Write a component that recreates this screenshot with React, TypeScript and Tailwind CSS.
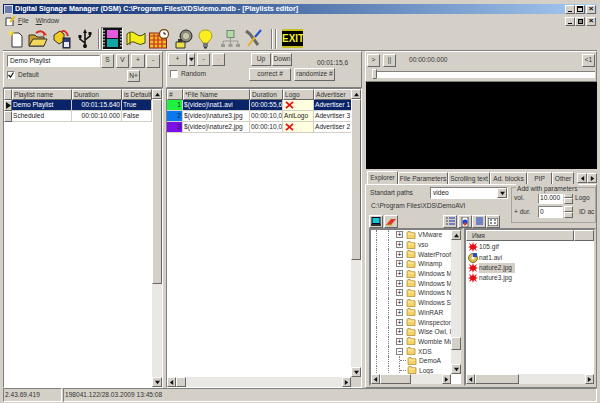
import type { ReactNode } from "react";

const raised = "border border-t-white border-l-white border-r-[#666] border-b-[#666] bg-[#d4d0c8]";
const sunken = "border border-t-[#808080] border-l-[#808080] border-r-white border-b-white";
const track = "bg-[#eae8e4]";

function Btn({ className = "", children }: { className?: string; children?: ReactNode }) {
  return <div className={`${raised} flex items-center justify-center shrink-0 text-[6.6px] leading-none text-[#333] whitespace-nowrap ${className}`}>{children}</div>;
}

function Tri({ dir }: { dir: "up" | "down" | "left" | "right" }) {
  const pts = { up: "3,1 0,5 6,5", down: "0,1 6,1 3,5", left: "5,0 5,6 1,3", right: "1,0 1,6 5,3" }[dir];
  return (
    <svg width="5" height="5" viewBox="0 0 6 6">
      <polygon points={pts} fill="#111" />
    </svg>
  );
}

function WinBtn({ children }: { children: ReactNode }) {
  return <div className={`${raised} w-[10px] h-[9px] flex items-center justify-center`}>{children}</div>;
}

function WinControls({ mdi }: { mdi?: boolean }) {
  return (
    <div className="flex items-center ml-auto">
      <WinBtn><div className="w-[4px] h-[1px] bg-black mt-[4px] mr-[1px]" /></WinBtn>
      {mdi ? (
        <WinBtn><div className="w-[5px] h-[5px] border border-black bg-[#888]" /></WinBtn>
      ) : (
        <WinBtn><div className="w-[6px] h-[6px] border border-black border-t-2" /></WinBtn>
      )}
      <div className="w-[1px]" />
      <WinBtn><span className="text-[8px] leading-none font-bold text-black">×</span></WinBtn>
    </div>
  );
}

function VScroll({ thumbH, className = "" }: { thumbH: number; className?: string }) {
  return (
    <div className={`w-[10px] shrink-0 flex flex-col ${track} ${className}`}>
      <Btn className="w-[10px] h-[10px]"><Tri dir="up" /></Btn>
      {thumbH > 0 && <div className={`${raised} w-[10px] shrink-0`} style={{ height: thumbH }} />}
      <div className="flex-1" />
      <Btn className="w-[10px] h-[10px]"><Tri dir="down" /></Btn>
    </div>
  );
}

function HScroll({ thumbW, className = "" }: { thumbW: number; className?: string }) {
  return (
    <div className={`h-[10px] flex shrink-0 ${track} ${className}`}>
      <Btn className="w-[9px] h-[10px]"><Tri dir="left" /></Btn>
      <div className={`${raised} h-[10px] shrink-0`} style={{ width: thumbW }} />
      <div className="flex-1" />
      <Btn className="w-[9px] h-[10px]"><Tri dir="right" /></Btn>
    </div>
  );
}

function Head({ w, children }: { w: string; children?: ReactNode }) {
  return <div className={`${raised} ${w} h-[11px] shrink-0 pl-[1px] text-[6.6px] leading-[9px] text-[#333] overflow-hidden whitespace-nowrap`}>{children}</div>;
}

function Cell({ w, sel, right, bg = "", children }: { w: string; sel?: boolean; right?: boolean; bg?: string; children?: ReactNode }) {
  return (
    <div className={`${w} h-[11px] shrink-0 px-[1px] border-r border-b border-r-[#d4d0c8] border-b-[#d4d0c8] text-[6.6px] leading-[10px] overflow-hidden whitespace-nowrap ${right ? "text-right" : ""} ${sel ? "bg-[#0a246a] text-white" : `${bg || "bg-white"} text-[#222]`}`}>
      {children}
    </div>
  );
}

function RedX() {
  return (
    <svg width="9" height="8" viewBox="0 0 10 9" className="ml-[1px] mt-[1px]">
      <path d="M1 1 L9 8 M9 1 L1 8" stroke="#e81010" strokeWidth="2" />
    </svg>
  );
}

function Folder() {
  return (
    <svg width="10" height="8" viewBox="0 0 10 9" className="shrink-0">
      <path d="M0.5 2 L0.5 8.5 L9.5 8.5 L9.5 2 L5 2 L4 0.5 L1.5 0.5 Z" fill="#f6d365" stroke="#a8842a" strokeWidth="0.8" />
      <path d="M1.5 3.4 L8.5 3.4" stroke="#fff3c0" strokeWidth="1" />
    </svg>
  );
}

function Splat() {
  return (
    <svg width="10" height="10" viewBox="0 0 10 10" className="shrink-0">
      <path d="M5 0 L6 3 L9 1 L7.5 4 L10 5 L7.5 6 L9 9 L6 7 L5 10 L4 7 L1 9 L2.5 6 L0 5 L2.5 4 L1 1 L4 3 Z" fill="#e80c14" />
    </svg>
  );
}

function Toolbar() {
  return (
    <div className="h-[23px] flex items-center shrink-0">
      {/* new */}
      <svg width="18" height="20" viewBox="0 0 18 20" className="ml-[4px]">
        <path d="M5 4 H12 L15 7 V18 H5 Z" fill="#fff" stroke="#333" />
        <path d="M4 0 L5 3 L8 4 L5 5 L4 8 L3 5 L0 4 L3 3 Z" fill="#f6e23a" />
      </svg>
      {/* open */}
      <svg width="20" height="20" viewBox="0 0 20 20" className="ml-[3px]">
        <path d="M1 6 H7 L9 8 H16 V17 H1 Z" fill="#c9a227" stroke="#333" />
        <path d="M1 17 L5 10 H19 L16 17 Z" fill="#f2d75a" stroke="#333" />
        <path d="M8 4 Q13 0 17 5" fill="none" stroke="#d7301f" strokeWidth="2" />
        <path d="M15 7 L19 6 L16 3 Z" fill="#d7301f" />
      </svg>
      {/* package */}
      <svg width="20" height="20" viewBox="0 0 20 20" className="ml-[4px]">
        <path d="M2 6 L8 2 L12 5 V12 L7 15 L2 11 Z" fill="#f0cc20" stroke="#333" />
        <rect x="11" y="9" width="7" height="10" fill="#2d3f80" stroke="#222" />
        <rect x="12" y="13" width="5" height="5" fill="#e8e8f0" />
        <path d="M9 3 Q14 0 16 7" fill="none" stroke="#d7301f" strokeWidth="2" />
      </svg>
      {/* usb */}
      <svg width="14" height="20" viewBox="0 0 14 20" className="ml-[6px]">
        <path d="M7 19 V3 M7 14 L2 10 V8 M7 11 L12 7 V5" fill="none" stroke="#111" strokeWidth="1.6" />
        <path d="M7 0 L9 4 H5 Z" fill="#111" />
        <circle cx="7" cy="17" r="2" fill="#111" />
        <rect x="0.5" y="6" width="3" height="3" fill="#111" />
        <rect x="10.5" y="3" width="3" height="3" fill="#111" />
      </svg>
      <div className="w-[2px] h-[20px] ml-[6px] border-l border-l-[#808080] border-r border-r-white" />
      {/* film, pressed */}
      <div className="ml-[1px] w-[22px] h-[23px] border border-t-[#808080] border-l-[#808080] border-r-white border-b-white bg-[#e4e2dd] flex items-center justify-center">
        <svg width="19" height="21" viewBox="0 0 19 21">
          <rect width="19" height="21" fill="#111" />
          <rect x="4" y="2" width="11" height="8" fill="#e35ce0" />
          <rect x="4" y="11" width="11" height="8" fill="#12a5a5" />
          <path d="M1 2 V20 M18 2 V20" stroke="#ddd" strokeWidth="1.4" strokeDasharray="1.5 1.5" />
        </svg>
      </div>
      {/* scroll */}
      <svg width="20" height="18" viewBox="0 0 20 18" className="ml-[3px]">
        <path d="M1 4 Q5 0 10 4 T19 3 V13 Q14 16 10 13 T1 15 Z" fill="#f4ec1c" stroke="#4a4a10" />
        <path d="M4 3 V15" stroke="#4a4a10" />
      </svg>
      {/* calendar */}
      <svg width="21" height="20" viewBox="0 0 21 20" className="ml-[3px]">
        <rect x="0.5" y="4" width="17" height="15" fill="#e8c020" stroke="#912020" />
        <path d="M1 7 H17 M1 11 H17 M1 15 H17 M5 5 V19 M9 5 V19 M13 5 V19" stroke="#d02828" strokeWidth="1.2" />
        <circle cx="15" cy="5" r="4.5" fill="#fff" stroke="#7a4a10" strokeWidth="1.3" />
        <path d="M15 3 V5 H17" stroke="#111" fill="none" />
      </svg>
      {/* clock box */}
      <svg width="18" height="20" viewBox="0 0 18 20" className="ml-[5px]">
        <circle cx="11" cy="7" r="6" fill="#8a8a78" stroke="#222" />
        <circle cx="11" cy="7" r="3" fill="#ccc8b0" />
        <path d="M1 13 H10 V19 H1 Z" fill="#eee04a" stroke="#333" />
        <path d="M3 10 H7 V13 H3 Z" fill="#333" />
      </svg>
      {/* bulb */}
      <svg width="15" height="20" viewBox="0 0 15 20" className="ml-[5px]">
        <path d="M7.5 1 C3 1 1 4 1 7 C1 10 4 11 5 14 H10 C11 11 14 10 14 7 C14 4 12 1 7.5 1 Z" fill="#f8ee20" stroke="#a89a20" />
        <rect x="5" y="14" width="5" height="4" fill="#777" />
        <rect x="6" y="18" width="3" height="1.5" fill="#333" />
      </svg>
      {/* network */}
      <svg width="21" height="18" viewBox="0 0 21 18" className="ml-[7px]">
        <rect x="7" y="0.5" width="7" height="7" fill="#b4d8a8" stroke="#6a8a70" />
        <path d="M10.5 8 V11 M3 14 V11 H18 V14 M10.5 11 V14" stroke="#9a9a90" fill="none" />
        <rect x="1" y="14" width="4" height="3" fill="#9a9a90" />
        <rect x="8.5" y="14" width="4" height="3" fill="#9a9a90" />
        <rect x="16" y="14" width="4" height="3" fill="#9a9a90" />
      </svg>
      {/* tools */}
      <svg width="19" height="19" viewBox="0 0 19 19" className="ml-[3px]">
        <path d="M2 2 L6 5 L14 16" fill="none" stroke="#6a6a6a" strokeWidth="3" />
        <path d="M17 1 L11 8" stroke="#2050d8" strokeWidth="2" />
        <path d="M11 8 L4 17" stroke="#e8b020" strokeWidth="2" />
      </svg>
      <div className="w-[2px] h-[20px] ml-[8px] border-l border-l-[#808080] border-r border-r-white" />
      <div className="w-[2px] h-[20px] ml-[2px] border-l border-l-[#808080] border-r border-r-white" />
      <div className="ml-[5px] w-[21px] h-[19px] bg-black border-y-2 border-y-[#c8c020] text-[#f4f020] font-bold text-[10px] leading-[15px] text-center overflow-hidden">EXIT</div>
    </div>
  );
}

function LeftPanel() {
  return (
    <div className="w-[160px] flex flex-col shrink-0">
      <div className="h-[37px] shrink-0 border border-t-white border-l-white border-r-[#808080] border-b-[#808080] flex flex-col pl-[3px] pt-[1px]">
        <div className="flex items-center h-[15px]">
          <div className={`${sunken} bg-white w-[93px] h-[12px] text-[6.6px] leading-[10px] pl-[2px] text-[#222]`}>Demo Playlist</div>
          <Btn className="w-[13px] h-[14px] ml-[1px]">S</Btn>
          <Btn className="w-[13px] h-[14px] ml-[2px]">V</Btn>
          <Btn className="w-[14px] h-[14px] ml-[2px]">+</Btn>
          <Btn className="w-[14px] h-[14px] ml-[1px]">-</Btn>
        </div>
        <div className="flex items-start mt-[1px]">
          <div className={`${sunken} bg-white w-[8px] h-[8px] mt-[2px] flex items-center justify-center`}>
            <svg width="6" height="6" viewBox="0 0 6 6"><path d="M0.5 3 L2.5 5 L5.5 0.5" stroke="#111" fill="none" strokeWidth="1.2" /></svg>
          </div>
          <span className="ml-[3px] text-[6.6px] leading-[12px] text-[#333] w-[109px]">Default</span>
          <Btn className="w-[13px] h-[12px] mt-[1px]">N+</Btn>
        </div>
      </div>
      <div className={`${sunken} flex-1 flex min-h-0 bg-white`}>
        <div className="flex-1 flex flex-col min-w-0">
          <div className="flex bg-[#d4d0c8]">
            <Head w="w-[8px]" />
            <Head w="w-[60px]">Playlist name</Head>
            <Head w="w-[50px]">Duration</Head>
            <Head w="w-[30px]">is Default</Head>
          </div>
          <div className="flex">
            <div className={`${raised} w-[8px] h-[11px] flex items-center justify-center`}>
              <svg width="5" height="7" viewBox="0 0 5 7"><polygon points="0,0 5,3.5 0,7" fill="#111" /></svg>
            </div>
            <Cell w="w-[60px]" sel>Demo Playlist</Cell>
            <Cell w="w-[50px]" sel right>00:01:15.640</Cell>
            <Cell w="w-[30px]" sel>True</Cell>
          </div>
          <div className="flex">
            <div className={`${raised} w-[8px] h-[11px]`} />
            <Cell w="w-[60px]">Scheduled</Cell>
            <Cell w="w-[50px]" right>00:00:10.000</Cell>
            <Cell w="w-[30px]">False</Cell>
          </div>
        </div>
        <VScroll thumbH={185} />
      </div>
    </div>
  );
}

function MidRow({ n, color, file, dur, sel, logo, adv }: { n: string; color: string; file: string; dur: string; sel?: boolean; logo?: string; adv: string }) {
  return (
    <div className="flex">
      <div className={`${color} w-[16px] h-[11px] shrink-0 border-r border-b border-[#d4d0c8] text-right pr-[1px] text-[6.6px] leading-[10px] text-[#222]`}>{n}</div>
      <Cell w="w-[67px]" sel={sel}>{file}</Cell>
      <Cell w="w-[33px]" sel={sel}>{dur}</Cell>
      <Cell w="w-[31px]" bg="bg-[#ffffe0]">{logo ?? <RedX />}</Cell>
      <Cell w="w-[38px]" sel={sel}>{adv}</Cell>
    </div>
  );
}

function MidPanel() {
  return (
    <div className="w-[196px] flex flex-col shrink-0 ml-[3px]">
      <div className="h-[37px] shrink-0 border border-t-white border-l-white border-r-[#808080] border-b-[#808080] flex flex-col pl-[1px] pt-[1px]">
        <div className="flex items-start h-[15px]">
          <Btn className="w-[19px] h-[13px]">+</Btn>
          <Btn className="w-[7px] h-[13px] ml-[1px]"><Tri dir="down" /></Btn>
          <Btn className="w-[13px] h-[13px] ml-[2px]">-</Btn>
          <Btn className="w-[13px] h-[13px] ml-[2px]"><span className="text-[#d88]">-</span></Btn>
          <Btn className="w-[20px] h-[13px] ml-[26px]">Up</Btn>
          <Btn className="w-[20px] h-[13px] ml-[1px]">Down</Btn>
          <span className="ml-[25px] mt-[5px] text-[6.6px] leading-[10px] text-[#333]">00:01:15,6</span>
        </div>
        <div className="flex items-start">
          <div className={`${sunken} bg-white w-[8px] h-[8px] ml-[2px] mt-[2px]`} />
          <span className="ml-[3px] text-[6.6px] leading-[12px] text-[#333] w-[68px]">Random</span>
          <Btn className="w-[42px] h-[13px]">correct #</Btn>
          <Btn className="w-[41px] h-[13px] ml-[3px]">randomize #</Btn>
        </div>
      </div>
      <div className={`${sunken} flex-1 flex flex-col min-h-0 bg-white`}>
        <div className="flex-1 flex min-h-0">
          <div className="flex-1 flex flex-col min-w-0">
            <div className="flex bg-[#d4d0c8]">
              <Head w="w-[16px]">#</Head>
              <Head w="w-[67px]">*File Name</Head>
              <Head w="w-[33px]">Duration</Head>
              <Head w="w-[31px]">Logo</Head>
              <Head w="w-[38px]">Advertiser</Head>
            </div>
            <MidRow n="1" color="bg-[#22f040]" file="$(video)\nat1.avi" dur="00:00:55,6" sel adv="Advertiser 1" />
            <MidRow n="2" color="bg-[#0a78f0]" file="$(video)\nature3.jpg" dur="00:00:10,0" logo="AniLogo" adv="Adevrtiser 3" />
            <MidRow n="3" color="bg-[#7a10e8]" file="$(video)\nature2.jpg" dur="00:00:10,0" adv="Advertiser 2" />
          </div>
          <VScroll thumbH={161} />
        </div>
        <div className="flex">
          <HScroll thumbW={10} className="flex-1" />
          <div className="w-[10px] bg-[#d4d0c8]" />
        </div>
      </div>
    </div>
  );
}

function Tab({ w, active, children }: { w: string; active?: boolean; children: ReactNode }) {
  return (
    <div className={`${w} ${active ? "h-[13px] bg-[#d4d0c8]" : "h-[12px]"} shrink-0 border-t border-l border-r border-t-white border-l-white border-r-[#666] rounded-t-[1px] text-[6.6px] leading-[11px] text-center text-[#333] whitespace-nowrap overflow-hidden`}>
      {children}
    </div>
  );
}

function TreeRow({ name, kind = "plus" }: { name: string; kind?: "plus" | "minus" | "child" }) {
  return (
    <div className="flex items-center h-[9.7px] pl-[5px]">
      <div className="w-[12px] h-full border-l border-dotted border-l-[#808080] shrink-0" />
      <div className="w-[8px] h-full border-l border-dotted border-l-[#808080] shrink-0" />
      {kind === "child" ? (
        <>
          <div className="w-[7px] shrink-0 h-full border-l border-dotted border-l-[#808080] flex items-center ml-[3px]">
            <div className="w-full border-t border-dotted border-t-[#808080]" />
          </div>
          <div className="w-[1px] shrink-0" />
        </>
      ) : (
        <div className="w-[7px] h-[7px] border border-[#808080] bg-white shrink-0 flex items-center justify-center text-[7px] leading-none text-black mr-[3px]">{kind === "plus" ? "+" : "−"}</div>
      )}
      <Folder />
      <span className="ml-[2px] text-[6.6px] leading-[9px] text-[#333] whitespace-nowrap">{name}</span>
    </div>
  );
}

function FileRow({ name, icon, sel }: { name: string; icon: ReactNode; sel?: boolean }) {
  return (
    <div className="flex items-center h-[10.4px] pl-[2px]">
      {icon}
      <span className={`ml-[1px] text-[6.6px] leading-[10px] text-[#333] ${sel ? "bg-[#d4d0c8] pr-[3px]" : ""}`}>{name}</span>
    </div>
  );
}

function RightPanel() {
  return (
    <div className="w-[232px] flex flex-col shrink-0 ml-[3px]">
      <div className="h-[31px] shrink-0 border border-t-white border-l-white border-r-[#808080] border-b-[#808080] flex flex-col pl-[1px] pt-[1px]">
        <div className="flex items-center h-[14px]">
          <Btn className="w-[13px] h-[13px]">&gt;</Btn>
          <Btn className="w-[13px] h-[13px] ml-[3px]">||</Btn>
          <span className="ml-[13px] text-[6.6px] text-[#333]">00:00:00.000</span>
          <Btn className="w-[13px] h-[13px] ml-auto mr-[1px] mt-[1px]">&lt;1</Btn>
        </div>
        <div className="flex items-center mt-[2px] pl-[5px] pr-[1px]">
          <div className={`${raised} w-[5px] h-[10px] shrink-0 rounded-b-[2px]`} />
          <div className="flex-1 h-[7px] bg-white border-t border-t-[#808080]" />
        </div>
      </div>
      <div className="h-[87px] shrink-0 bg-black ml-[1px]" />
      {/* tabs */}
      <div className="flex h-[13px] mt-[2px] pl-[2px] items-end shrink-0">
        <Tab w="w-[31px]" active>Explorer</Tab>
        <Tab w="w-[50px]">File Parameters</Tab>
        <Tab w="w-[42px]">Scrolling text</Tab>
        <Tab w="w-[37px]">Ad. blocks</Tab>
        <Tab w="w-[25px]">PIP</Tab>
        <Tab w="w-[22px]">Other</Tab>
        <Btn className="w-[10px] h-[10px] ml-auto mb-[1px]"><Tri dir="left" /></Btn>
        <Btn className="w-[10px] h-[10px] mb-[1px]"><Tri dir="right" /></Btn>
      </div>
      <div className="flex-1 min-h-0 border border-t-white border-l-white border-r-[#808080] border-b-[#808080] flex flex-col pl-[3px] pr-[2px] pt-[2px]">
        <div className="h-[40px] flex shrink-0">
          <div className="w-[142px] shrink-0 flex flex-col">
            <div className="flex items-center h-[12px]">
              <span className="text-[6.6px] text-[#333] w-[61px] shrink-0 whitespace-nowrap pl-[1px]">Standart paths</span>
              <div className={`${sunken} bg-white w-[78px] h-[12px] flex items-center justify-between text-[6.6px] pl-[2px] text-[#222]`}>
                video
                <Btn className="w-[10px] h-[10px]"><Tri dir="down" /></Btn>
              </div>
            </div>
            <div className="text-[6.6px] leading-[12px] mt-[1px] ml-[2px] text-[#333] whitespace-nowrap">C:\Program Files\XDS\DemoAVI</div>
            <div className="flex mt-[3px]">
              <Btn className="w-[14px] h-[13px]">
                <svg width="10" height="9" viewBox="0 0 10 9"><rect x="1" y="0.5" width="8" height="6" fill="#18c8c8" stroke="#003" /><rect x="0" y="7" width="10" height="2" fill="#333" /></svg>
              </Btn>
              <Btn className="w-[14px] h-[13px] ml-[1px]">
                <svg width="10" height="8" viewBox="0 0 10 8"><path d="M0 7 L5 1 H10 L5 7 Z" fill="#e03820" /><path d="M1 7 H6" stroke="#c8a020" /></svg>
              </Btn>
              <div className="ml-[45px] flex">
                <Btn className="w-[14px] h-[13px]"><svg width="9" height="9" viewBox="0 0 9 9"><path d="M3 1 H9 M3 4 H9 M3 7 H9" stroke="#1030c0" /><path d="M0 1 H2 M0 4 H2 M0 7 H2" stroke="#444" /></svg></Btn>
                <Btn className="w-[14px] h-[13px] ml-[1px]"><svg width="10" height="10" viewBox="0 0 10 10"><path d="M2 0 H8 V10 H2 Z" fill="#fff" stroke="#555" /><circle cx="5" cy="5" r="2.5" fill="#1848d0" /><circle cx="5" cy="7" r="1.5" fill="#e03820" /></svg></Btn>
                <Btn className="w-[14px] h-[13px]"><svg width="9" height="9" viewBox="0 0 9 9"><path d="M1 1 H8 M1 3 H8 M1 5 H8 M1 7 H8" stroke="#1030c0" /></svg></Btn>
                <Btn className="w-[14px] h-[13px]"><svg width="10" height="8" viewBox="0 0 10 8"><rect width="10" height="8" fill="#fff" stroke="#222" /><path d="M2 2 H4 M6 2 H8 M2 5 H4 M6 5 H8" stroke="#123" /></svg></Btn>
              </div>
            </div>
          </div>
          <div className="relative w-[85px] h-[36px] shrink-0 border border-[#a8a49c] pt-[4px] pl-[2px]">
            <div className="absolute -top-[4px] left-[4px] px-[1px] bg-[#d4d0c8] text-[6.6px] leading-[10px] text-[#333] whitespace-nowrap">Add with parameters</div>
            <div className="flex items-center h-[12px]">
              <span className="w-[24px] text-[6.6px] text-[#333]">vol.</span>
              <div className={`${sunken} bg-white w-[25px] h-[12px] text-[6.6px] leading-[10px] pl-[1px] text-[#222]`}>10.000</div>
              <div className="flex flex-col ml-[1px]">
                <Btn className="w-[9px] h-[6px]" />
                <Btn className="w-[9px] h-[6px]" />
              </div>
              <span className="ml-[2px] text-[6.6px] text-[#333]">Logo</span>
            </div>
            <div className="flex items-center h-[12px] mt-[2px] overflow-hidden">
              <span className="w-[24px] text-[6.6px] text-[#333] whitespace-nowrap">+ dur.</span>
              <div className={`${sunken} bg-white w-[25px] h-[12px] text-[6.6px] leading-[10px] pl-[1px] text-[#222]`}>0</div>
              <div className="flex flex-col ml-[1px]">
                <Btn className="w-[9px] h-[6px]" />
                <Btn className="w-[9px] h-[6px]" />
              </div>
              <span className="ml-[6px] text-[6.6px] text-[#333] whitespace-nowrap">ID ac</span>
            </div>
          </div>
        </div>
        <div className="flex mt-[1px] h-[158px] shrink-0">
          {/* folder tree */}
          <div className="w-[94px] shrink-0 border-2 border-t-[#808080] border-l-[#808080] border-r-[#d4d0c8] border-b-[#d4d0c8] flex flex-col bg-white">
            <div className="flex-1 flex min-h-0">
              <div className="flex-1 min-w-0 overflow-hidden">
                <TreeRow name="VMware" />
                <TreeRow name="vso" />
                <TreeRow name="WaterProof" />
                <TreeRow name="Winamp" />
                <TreeRow name="Windows M" />
                <TreeRow name="Windows M" />
                <TreeRow name="Windows N" />
                <TreeRow name="Windows S" />
                <TreeRow name="WinRAR" />
                <TreeRow name="Winspector" />
                <TreeRow name="Wise Owl, I" />
                <TreeRow name="Womble Mu" />
                <TreeRow name="XDS" kind="minus" />
                <TreeRow name="DemoA" kind="child" />
                <TreeRow name="Logs" kind="child" />
              </div>
              <div className={`w-[10px] shrink-0 flex flex-col ${track}`}>
                <Btn className="w-[10px] h-[10px]"><Tri dir="up" /></Btn>
                <div className="h-[97px]" />
                <div className={`${raised} w-[10px] h-[13px]`} />
                <div className="flex-1" />
                <Btn className="w-[10px] h-[10px]"><Tri dir="down" /></Btn>
              </div>
            </div>
            <HScroll thumbW={31} className="mr-[10px]" />
          </div>
          {/* file list */}
          <div className="w-[132px] shrink-0 ml-[1px] border-2 border-t-[#808080] border-l-[#808080] border-r-[#d4d0c8] border-b-[#d4d0c8] flex flex-col bg-white">
            <div className="flex">
              <Head w="w-[108px]"><span className="pl-[4px]">Имя</span></Head>
              <Head w="w-[20px]" />
            </div>
            <div className="flex-1 pt-[1px] min-h-0">
              <FileRow name="105.gif" icon={<Splat />} />
              <FileRow
                name="nat1.avi"
                icon={
                  <svg width="10" height="10" viewBox="0 0 10 10" className="shrink-0">
                    <circle cx="5" cy="5" r="4.5" fill="#d8c050" stroke="#807020" />
                    <circle cx="5" cy="5" r="1.5" fill="#fff" />
                    <rect x="5" y="0" width="4" height="4" fill="#2050d0" />
                  </svg>
                }
              />
              <FileRow name="nature2.jpg" icon={<Splat />} sel />
              <FileRow name="nature3.jpg" icon={<Splat />} />
            </div>
            <HScroll thumbW={44} />
          </div>
        </div>
      </div>
    </div>
  );
}

export default function App() {
  return (
    <div className="w-[600px] h-[403px] bg-[#d4d0c8] overflow-hidden flex flex-col pt-[4px] font-['Liberation_Sans',sans-serif]">
      <div className="h-[10px] mx-[3px] shrink-0 flex items-center bg-gradient-to-r from-[#0a246a] to-[#a6caf0]">
        <div className="w-[9px] h-[9px] ml-[1px] bg-[#6a7ab0] border border-[#ddd] shrink-0" />
        <span className="ml-[2px] text-[7.2px] leading-[10px] font-bold text-white whitespace-nowrap">Digital Signage Manager (DSM) C:\Program Files\XDS\demo.mdb - [Playlists editor]</span>
        <div className="ml-auto mr-[1px]"><WinControls /></div>
      </div>
      <div className="h-[12px] mx-[3px] mt-[1px] shrink-0 flex items-center">
        <svg width="10" height="10" viewBox="0 0 10 10" className="ml-[2px]">
          <path d="M1 2 H6 L8 4 V10 H1 Z" fill="#fff" stroke="#333" />
          <path d="M5 6 L10 0" stroke="#e8c020" strokeWidth="2" />
        </svg>
        <span className="ml-[3px] text-[6.6px] leading-[10px] text-[#333]"><u>F</u>ile</span>
        <span className="ml-[7px] text-[6.6px] leading-[10px] text-[#333]"><u>W</u>indow</span>
        <div className="ml-auto mr-[1px]"><WinControls mdi /></div>
      </div>
      <div className="mx-[3px]"><Toolbar /></div>
      <div className="h-[338px] mx-[3px] shrink-0 flex border-t border-t-[#808080]">
        <LeftPanel />
        <MidPanel />
        <RightPanel />
      </div>
      <div className="flex-1 flex mx-[3px] text-[6.6px] leading-[12px] text-[#333]">
        <div className={`${sunken} w-[59px] h-[14px] pl-[1px] whitespace-nowrap`}>2.43.69.419</div>
        <div className={`${sunken} flex-1 ml-[1px] h-[14px] pl-[1px] whitespace-nowrap`}>198041.122/28.03.2009 13:45:08</div>
      </div>
    </div>
  );
}
